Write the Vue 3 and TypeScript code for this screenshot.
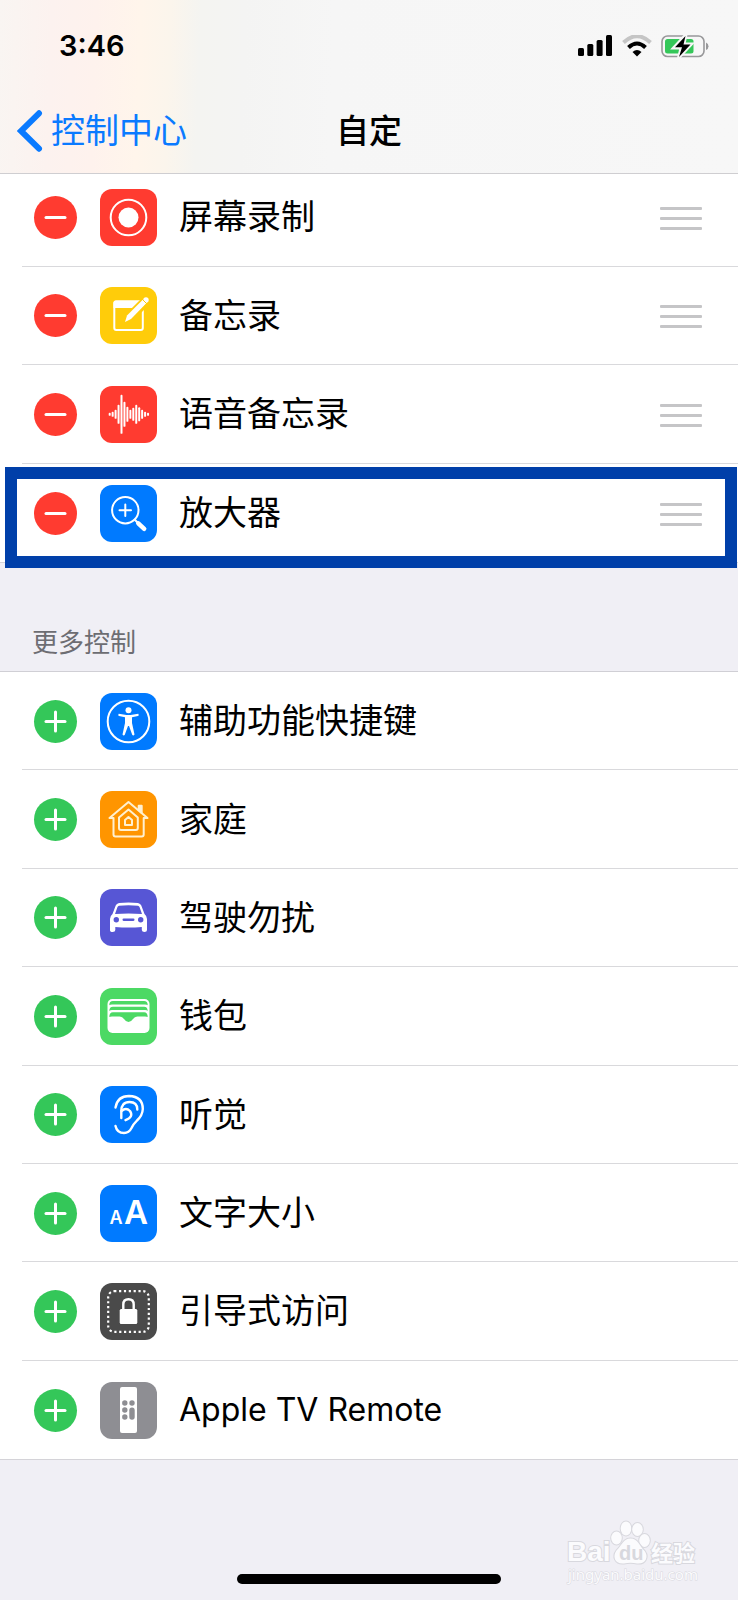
<script setup lang="ts">
type IconName =
  | 'record' | 'notes' | 'voice' | 'magnifier' | 'access' | 'home'
  | 'car' | 'wallet' | 'ear' | 'text' | 'lock' | 'remote'

interface Control {
  icon: IconName
  label: string
  lang?: string
  highlighted?: boolean
}

const included: Control[] = [
  { icon: 'record', label: '屏幕录制' },
  { icon: 'notes', label: '备忘录' },
  { icon: 'voice', label: '语音备忘录' },
  { icon: 'magnifier', label: '放大器', highlighted: true },
]

const more: Control[] = [
  { icon: 'access', label: '辅助功能快捷键' },
  { icon: 'home', label: '家庭' },
  { icon: 'car', label: '驾驶勿扰' },
  { icon: 'wallet', label: '钱包' },
  { icon: 'ear', label: '听觉' },
  { icon: 'text', label: '文字大小' },
  { icon: 'lock', label: '引导式访问' },
  { icon: 'remote', label: 'Apple TV Remote', lang: 'en' },
]

const groups = [
  { id: 'included', kind: 'remove', items: included },
  { id: 'more', kind: 'add', items: more },
]

const waveform: number[] = [3, 5, 9, 19, 39, 25, 15, 9, 13, 19, 14, 9, 5, 3]
</script>

<template>
  <div class="page">
    <header class="top">
      <div class="status">
        <time class="clock">3:46</time>
        <div class="indicators">
          <svg width="35" height="22" viewBox="0 0 35 22" aria-hidden="true">
            <rect x="0" y="13" width="6" height="8" rx="1.5" />
            <rect x="9.300" y="9" width="6" height="12" rx="1.5" />
            <rect x="18.600" y="5" width="6" height="16" rx="1.5" />
            <rect x="28" y="0" width="6" height="21" rx="1.5" />
          </svg>
          <svg width="30" height="22" viewBox="0 0 30 22" aria-hidden="true">
            <path d="M1.500 7.500Q15-5 28.500 7.500" fill="none" stroke="#c5c5c5" stroke-width="4" />
            <path d="M6.500 12.500Q15 4.500 23.500 12.500" fill="none" stroke="#000" stroke-width="4" />
            <path d="M10.500 17Q15 13 19.500 17L15 21.500Z" />
          </svg>
          <svg width="48" height="24" viewBox="0 0 48 24" aria-hidden="true">
            <rect x="1" y="2" width="42" height="20.500" rx="5.500" fill="none" stroke="#98989a" stroke-width="1.600" />
            <path d="M45 8.500Q47.500 9.500 47.500 12.200T45 16Z" fill="#98989a" />
            <rect x="4" y="5" width="28.500" height="14.500" rx="2.500" fill="#34c759" />
            <path d="M25 0.500L12.500 14H20L17.500 24L30.500 10H23Z" stroke="#f7f7f7" stroke-width="3" />
            <path d="M24.500 2L14 13.200H21L18 23L29.500 10.600H22.500Z" />
          </svg>
        </div>
      </div>
      <nav class="nav">
        <a class="back" href="#control-center">
          <svg width="26" height="42" viewBox="0 0 26 42" aria-hidden="true">
            <path d="M22 3.300L4 21L22 38.700" fill="none" stroke="#0a7aff" stroke-width="6" stroke-linecap="round" />
          </svg>
          <span>控制中心</span>
        </a>
        <h1 class="title">自定</h1>
      </nav>
    </header>

    <main class="content">
      <section v-for="group in groups" :key="group.id" :class="['group', group.id]">
        <h2 v-if="group.kind === 'add'" class="heading">更多控制</h2>
        <ul class="list">
          <li v-for="item in group.items" :key="item.icon" :class="['row', { highlighted: item.highlighted }]">
            <button :class="['toggle', group.kind]" type="button" :aria-labelledby="`label-${item.icon}`">
              <svg viewBox="0 0 43 43" aria-hidden="true">
                <path d="M12 21.500H31" />
                <path v-if="group.kind === 'add'" d="M21.500 12V31" />
              </svg>
            </button>

            <svg :class="['tile', item.icon]" viewBox="0 0 57 57" aria-hidden="true">
              <template v-if="item.icon === 'record'">
                <circle class="line" cx="28.500" cy="28.500" r="17.800" />
                <circle cx="28.500" cy="28.500" r="10" />
              </template>
              <template v-else-if="item.icon === 'notes'">
                <rect class="line" x="14.300" y="14.500" width="28.500" height="28.500" rx="2" />
                <path d="M13.500 15.500Q13.500 13.500 15.500 13.500H43.500V21H13.500Z" />
                <path d="M25 35L27 28.500L43 12.500Q46 9.500 48.500 12T48 16.500L31.500 33Z" stroke="#ffcc0a" stroke-width="3.500" />
                <path d="M25 35L27 28.500L43 12.500L46.500 16L31 32Z" />
                <circle cx="46" cy="13" r="2.700" />
                <path d="M41.500 11.500L47.500 17.500" stroke="#ffcc0a" stroke-width="1" />
              </template>
              <template v-else-if="item.icon === 'voice'">
                <rect
                  v-for="(size, index) in waveform"
                  :key="index"
                  :x="8.700 + index * 2.950"
                  :y="28.300 - size / 2"
                  width="2"
                  :height="size"
                  rx="0.900"
                />
              </template>
              <template v-else-if="item.icon === 'magnifier'">
                <circle class="line" cx="25.300" cy="25.200" r="13.200" />
                <path class="line" d="M19.500 25.200H31M25.300 19.400V31" />
                <path class="line" d="M34.800 34.700L38 38" />
                <path d="M38.300 38.300L44.200 43.800" stroke="#fff" stroke-width="4.500" stroke-linecap="round" />
              </template>
              <template v-else-if="item.icon === 'access'">
                <circle class="line" cx="28.500" cy="28.500" r="20.800" />
                <circle cx="28.500" cy="17.200" r="3" />
                <path d="M18.700 20.800L26.500 22H30.500L38.300 20.800Q39.500 22.500 38 23L32 24.300V30L34.500 41.500Q33.500 43 32.300 42L29 33H28L24.700 42Q23.500 43 22.500 41.500L25 30V24.300L19 23Q17.500 22.500 18.700 20.800Z" />
              </template>
              <template v-else-if="item.icon === 'home'">
                <path class="line pale" d="M13.500 27H9.500L28.500 11L47.500 27H43.700V43.500Q43.700 45.500 41.700 45.500H15.500Q13.500 45.500 13.500 43.500Z" />
                <path d="M38.700 19V14.800H41.700V22Z" class="line pale solid" />
                <path class="line pale" d="M28.500 18.500L37.800 26.500V37Q37.800 39 35.800 39H21Q19 39 19 37V26.500Z" />
                <path class="line pale" d="M28.500 26L32 29V34H25V29Z" />
              </template>
              <template v-else-if="item.icon === 'car'">
                <path d="M19 14Q28.500 12.800 38 14Q40.500 14.500 41.300 16.500L44.500 25Q47 27 47 30V41Q47 43 44.500 43T41.800 41V38Q28.500 39 15.300 38V41Q15.300 43 12.600 43T10 41V30Q10 27 12.500 25L15.700 16.500Q16.500 14.500 19 14Z" />
                <g fill="#5756d5">
                  <path d="M19 16.800Q28.500 15.800 38 16.800Q39 17 39.500 18L42 25Q28.500 23.800 15 25L17.500 18Q18 17 19 16.800Z" />
                  <circle cx="16.300" cy="30.700" r="2.700" />
                  <circle cx="40.700" cy="30.700" r="2.700" />
                  <rect x="22.500" y="29.600" width="12" height="2.300" rx="1.100" />
                </g>
              </template>
              <template v-else-if="item.icon === 'wallet'">
                <rect x="7.500" y="11" width="42" height="34" rx="5" />
                <g fill="#4cd964">
                  <path d="M9.300 17.200Q9.300 13 13 13H44Q47.700 13 47.700 17.200Q47 16.500 45 16.500H12Q10 16.500 9.300 17.200Z" />
                  <path d="M9.300 23Q9.300 18.700 13 18.700H44Q47.700 18.700 47.700 23Q47 22 45 22H12Q10 22 9.300 23Z" />
                  <path d="M9.300 29Q9.300 24.200 13 24.200H44Q47.700 24.200 47.700 29Q47 28.500 45 28.500H37.500Q34.500 28.500 33 31Q31 34 28.500 34T24 31Q22.500 28.500 19.500 28.500H12Q10 28.500 9.300 29Z" />
                </g>
              </template>
              <template v-else-if="item.icon === 'ear'">
                <path class="line thick" d="M15.500 21.500Q17.500 10 29 10Q42.800 10.500 42.800 23Q42.500 29.500 37 34.500Q33 38.500 31.500 42Q29 47 24 47Q17 47 15.500 40" />
                <path class="line thick" d="M21.300 32V25Q21.300 16 29.500 16Q37.300 16 37.300 23.500" />
                <path class="line thick" d="M21.500 25Q26 21 30 25Q34 31 25.500 34.200" />
              </template>
              <template v-else-if="item.icon === 'text'">
                <text x="9.500" y="38.700" font-size="18">A</text>
                <text x="24" y="38.700" font-size="33">A</text>
              </template>
              <template v-else-if="item.icon === 'lock'">
                <rect
                  x="8.200" y="8.200" width="40.600" height="40.600" rx="6"
                  fill="none" stroke="#fff" stroke-width="2.200" stroke-dasharray="2.200 2.650"
                />
                <rect x="19.700" y="26" width="17.600" height="15" rx="1.500" />
                <path class="line thick" d="M23.300 27V21.500Q23.300 16.300 28.500 16.300T33.700 21.500V27" />
              </template>
              <template v-else>
                <rect x="20" y="5" width="17" height="46" rx="2" />
                <g fill="#8e8e93">
                  <circle cx="24.800" cy="21" r="2.700" />
                  <circle cx="32" cy="21" r="2.700" />
                  <circle cx="24.800" cy="28" r="2.700" />
                  <circle cx="24.800" cy="35" r="2.700" />
                  <rect x="29.300" y="25.500" width="5.400" height="12.300" rx="2.700" />
                </g>
              </template>
            </svg>

            <span :id="`label-${item.icon}`" class="label" :lang="item.lang ?? 'zh-CN'">{{ item.label }}</span>

            <button v-if="group.kind === 'remove'" class="handle" type="button" :aria-labelledby="`label-${item.icon}`">
              <i></i><i></i><i></i>
            </button>
          </li>
        </ul>
      </section>
    </main>

    <footer class="bottom">
      <svg class="watermark" viewBox="0 0 140 68" role="img" aria-label="Baidu 经验 jingyan.baidu.com">
        <g class="brand">
          <text class="latin" x="1" y="43" font-size="28">Bai</text>
          <ellipse cx="50.500" cy="20" rx="5.300" ry="6.500" />
          <ellipse cx="60" cy="10.500" rx="5.300" ry="7" />
          <ellipse cx="71.500" cy="11.500" rx="5.300" ry="6.500" />
          <ellipse cx="78.500" cy="22.500" rx="5.300" ry="6.500" />
          <path d="M64.500 20.500C72 20.500 73 27.500 79 33.500C83 39.500 79 46.500 71 45.500Q64.500 44 58 45.500C49 46.500 46 38.500 50.500 32.500C56 27.500 57 20.500 64.500 20.500Z" />
          <text class="cjk" x="85" y="43" font-size="22">经验</text>
        </g>
        <text class="du" x="53" y="42" font-size="20">du</text>
        <text class="site" x="2" y="62" font-size="15">jingyan.baidu.com</text>
      </svg>
      <div class="home-bar"></div>
    </footer>
  </div>
</template>

<style>
body {
  margin: 0;
  background: #f0eff5;
}
</style>

<style scoped>
.page {
  display: flex;
  flex-direction: column;
  min-height: 100vh;
  background: #f0eff5;
  color: #000;
  font-family: Inter, "Noto Sans CJK SC", sans-serif;
}

.top {
  position: relative;
  z-index: 1;
  border-bottom: 1px solid #cfced1;
  background: linear-gradient(92deg, #f9f5f2 0, #fcf2ef 7%, #fef2ed 13%, #fff5eb 19%, #fbf5ec 23%, #f4f4f1 27%, #f4f4f3 33%, #f6f6f6 45%, #f7f7f7 100%);
}

.status {
  display: flex;
  align-items: center;
  justify-content: space-between;
  height: 91px;
  padding: 0 29px 0 59px;
}

.clock {
  font-size: 29px;
  font-weight: 600;
  line-height: 40px;
}

.indicators {
  display: flex;
  align-items: center;
  gap: 9px;
}

.nav {
  display: grid;
  grid-template-columns: 1fr auto 1fr;
  align-items: center;
  height: 79px;
  padding: 0 17px 3px;
}

.back {
  display: flex;
  align-items: center;
  gap: 8px;
  color: #0a7aff;
  font-size: 34px;
  line-height: 48px;
  text-decoration: none;
}

.title {
  margin: 0;
  font-size: 33px;
  font-weight: 500;
  line-height: 48px;
}

.group.included {
  margin-top: -6px;
}

.heading {
  margin: 0;
  padding: 60px 32px 8px;
  color: #6d6d72;
  font-size: 26px;
  font-weight: 400;
  line-height: 40px;
}

.list {
  display: grid;
  grid-auto-rows: 1fr;
  margin: 0;
  padding: 0;
  border-bottom: 1px solid #d4d3d8;
  background: #fff;
  list-style: none;
}

.included .list {
  min-height: 394px;
}

.more .list {
  min-height: 787px;
  border-top: 1px solid #d0cfd5;
}

.row {
  position: relative;
  display: flex;
  align-items: center;
  margin-left: 22px;
  padding: 1px 36px 0 12px;
}

.row:not(:last-child) {
  border-bottom: 1px solid #d9d9dc;
}

.highlighted::after {
  content: "";
  position: absolute;
  inset: 3px 1px -6px -17px;
  border: 12px solid #003fa9;
  pointer-events: none;
}

.toggle {
  width: 43px;
  height: 43px;
  margin-right: 23px;
  padding: 0;
  border: 0;
  border-radius: 50%;
}

.toggle.remove {
  background: #ff3b30;
}

.toggle.add {
  background: #34c759;
}

.toggle svg {
  display: block;
  fill: none;
  stroke: #fff;
  stroke-width: 3;
  stroke-linecap: round;
}

.tile {
  width: 57px;
  height: 57px;
  margin-right: 22px;
  border-radius: 12px;
  fill: #fff;
  font-weight: 600;
}

.tile .line {
  fill: none;
  stroke: #fff;
  stroke-width: 2;
  stroke-linecap: round;
  stroke-linejoin: round;
}

.tile .pale {
  stroke: #fff0d0;
}

.tile .solid {
  fill: #fff0d0;
}

.tile .thick {
  stroke-width: 2.4;
}

.record, .voice {
  background: #ff3b30;
}

.notes {
  background: #ffcc0a;
}

.magnifier, .access, .ear, .text {
  background: #007aff;
}

.home {
  background: #ff9500;
}

.car {
  background: #5756d5;
}

.wallet {
  background: #4cd964;
}

.lock {
  background: #4a4a4a;
}

.remote {
  background: #8e8e93;
}

.label {
  flex: 1;
  font-size: 34px;
  line-height: 48px;
}

.label:lang(en) {
  font-size: 32px;
}

.handle {
  display: grid;
  gap: 7px;
  width: 42px;
  padding: 2px 0 0;
  border: 0;
  background: none;
}

.handle i {
  height: 3px;
  border-radius: 1px;
  background: #c5c5c7;
}

.bottom {
  display: flex;
  flex-direction: column;
  align-items: center;
  margin-top: auto;
  padding-bottom: 16px;
}

.watermark {
  align-self: flex-end;
  width: 140px;
  height: 68px;
  margin: 0 32px -12px 0;
}

.brand {
  fill: #fbfbfd;
  stroke: #d8d8de;
  stroke-width: 2;
  paint-order: stroke;
}

.latin {
  font-family: "Liberation Sans", sans-serif;
  font-weight: 700;
}

.cjk {
  font-family: "Noto Sans CJK SC", sans-serif;
  font-weight: 700;
}

.du {
  fill: #d8d8de;
  font-family: "Liberation Sans", sans-serif;
  font-weight: 700;
}

.site {
  fill: #fbfbfd;
  stroke: #d8d8de;
  stroke-width: 1;
  paint-order: stroke;
  font-family: "Noto Sans", sans-serif;
}

.home-bar {
  width: 264px;
  height: 10px;
  border-radius: 5px;
  background: #000;
}
</style>
